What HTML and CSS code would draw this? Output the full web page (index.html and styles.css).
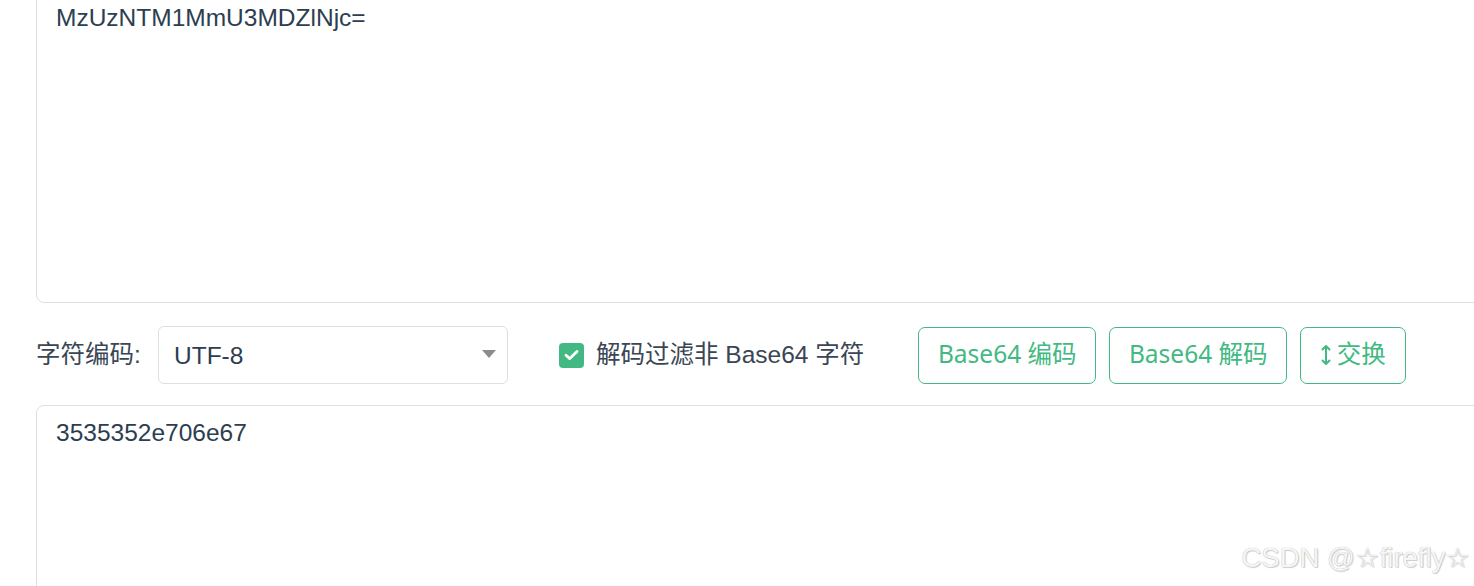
FILE: index.html
```html
<!DOCTYPE html>
<html lang="zh-CN">

<head>
    <meta charset="UTF-8">
    <meta name="viewport" content="width=device-width, initial-scale=1.0">
    <title>Base64 编码解码</title>
    <link rel="stylesheet" href="styles.css">
</head>

<body>
    <div class="container">
        <textarea class="text-box top-box" id="input-text" spellcheck="false">MzUzNTM1MmU3MDZlNjc=</textarea>

        <div class="toolbar">
            <label class="field-label" for="charset">字符编码:</label>
            <div class="select-wrap">
                <select id="charset" class="charset-select">
                    <option value="UTF-8">UTF-8</option>
                    <option value="GBK">GBK</option>
                    <option value="ISO-8859-1">ISO-8859-1</option>
                </select>
                <svg class="select-arrow" width="14" height="8" viewBox="0 0 14 8">
                    <path d="M0 0 L14 0 L7 8 Z" fill="#8c8c8c" />
                </svg>
            </div>

            <label class="filter-check">
                <span class="check-box">
                    <svg width="15" height="12" viewBox="0 0 15 12">
                        <path d="M2 6.2 L5.8 9.6 L13 2.4" fill="none" stroke="#fff" stroke-width="2.8"
                            stroke-linecap="round" stroke-linejoin="round" />
                    </svg>
                </span>
                <span class="check-text">解码过滤非 Base64 字符</span>
            </label>

            <div class="btn-group">
                <button class="action-btn btn-encode">Base64 编码</button>
                <button class="action-btn btn-decode">Base64 解码</button>
                <button class="action-btn btn-swap">
                    <svg class="swap-icon" width="10" height="22" viewBox="0 0 10 22">
                        <path d="M5 2 V20 M1.5 5.5 L5 2 L8.5 5.5 M1.5 16.5 L5 20 L8.5 16.5" fill="none"
                            stroke="#42b983" stroke-width="2" stroke-linecap="round" stroke-linejoin="round" />
                    </svg>
                    交换
                </button>
            </div>
        </div>

        <textarea class="text-box bottom-box" id="output-text" spellcheck="false">3535352e706e67</textarea>
    </div>

    <div class="watermark">CSDN @☆firefly☆</div>
</body>

</html>
```

FILE: styles.css
```css
html, body {
    margin: 0;
    padding: 0;
    background-color: #fff;
    overflow: hidden;
}

body {
    font-family: "Liberation Sans", "Noto Sans CJK SC", sans-serif;
    color: #2c3e50;
    height: 586px;
}

.container {
    padding-left: 36px;
    height: 586px;
    overflow: hidden;
}

.text-box {
    display: block;
    width: 1500px;
    box-sizing: border-box;
    border: 1px solid #dcdfe6;
    border-radius: 8px;
    padding: 9px 19px;
    font-family: "Liberation Sans", "Noto Sans CJK SC", sans-serif;
    font-size: 24.5px;
    line-height: 36px;
    color: #2c3e50;
    background-color: #fff;
    resize: none;
    outline: none;
}

.top-box {
    margin-top: -10px;
    height: 313px;
}

.bottom-box {
    height: 200px;
}

.toolbar {
    display: flex;
    align-items: center;
    height: 58px;
    margin: 23px 0 21px;
}

.field-label {
    width: 122px;
    flex-shrink: 0;
    padding-bottom: 5px;
    font-size: 24.5px;
    color: #3a4654;
}

.select-wrap {
    position: relative;
    width: 350px;
    height: 58px;
}

.charset-select {
    appearance: none;
    -webkit-appearance: none;
    width: 100%;
    height: 100%;
    box-sizing: border-box;
    border: 1px solid #dcdfe6;
    border-radius: 6px;
    padding: 0 15px;
    font-family: "Liberation Sans", "Noto Sans CJK SC", sans-serif;
    font-size: 24.5px;
    color: #2c3e50;
    background-color: #fff;
    outline: none;
}

.select-arrow {
    position: absolute;
    right: 12px;
    top: 24px;
}

.filter-check {
    display: flex;
    align-items: center;
    gap: 12px;
    margin-left: 51px;
    font-size: 24.5px;
    color: #3a4654;
}

.check-text {
    padding-bottom: 5px;
}

.check-box {
    display: flex;
    align-items: center;
    justify-content: center;
    width: 25px;
    height: 25px;
    border-radius: 4px;
    background-color: #42b983;
}

.btn-group {
    display: flex;
    gap: 13px;
    margin-left: 54px;
}

.action-btn {
    display: flex;
    align-items: center;
    justify-content: center;
    gap: 6px;
    height: 57px;
    box-sizing: border-box;
    padding: 0 0 5px;
    border: 1px solid #42b983;
    border-radius: 7px;
    background-color: #fff;
    color: #42b983;
    font-family: "Noto Sans", "Noto Sans CJK SC", sans-serif;
    font-size: 24.5px;
    white-space: nowrap;
    cursor: pointer;
}

.btn-encode, .btn-decode {
    width: 178px;
}

.btn-swap {
    width: 106px;
}

.swap-icon {
    margin-top: 4px;
}

.watermark {
    position: absolute;
    right: 4px;
    bottom: 12px;
    font-family: "Liberation Sans", "DejaVu Sans", sans-serif;
    font-size: 27.5px;
    color: #f6f6f6;
    text-shadow: 0 0 1px #a8a8a8, 1px 1px 1px #d0d0d0;
}
```
